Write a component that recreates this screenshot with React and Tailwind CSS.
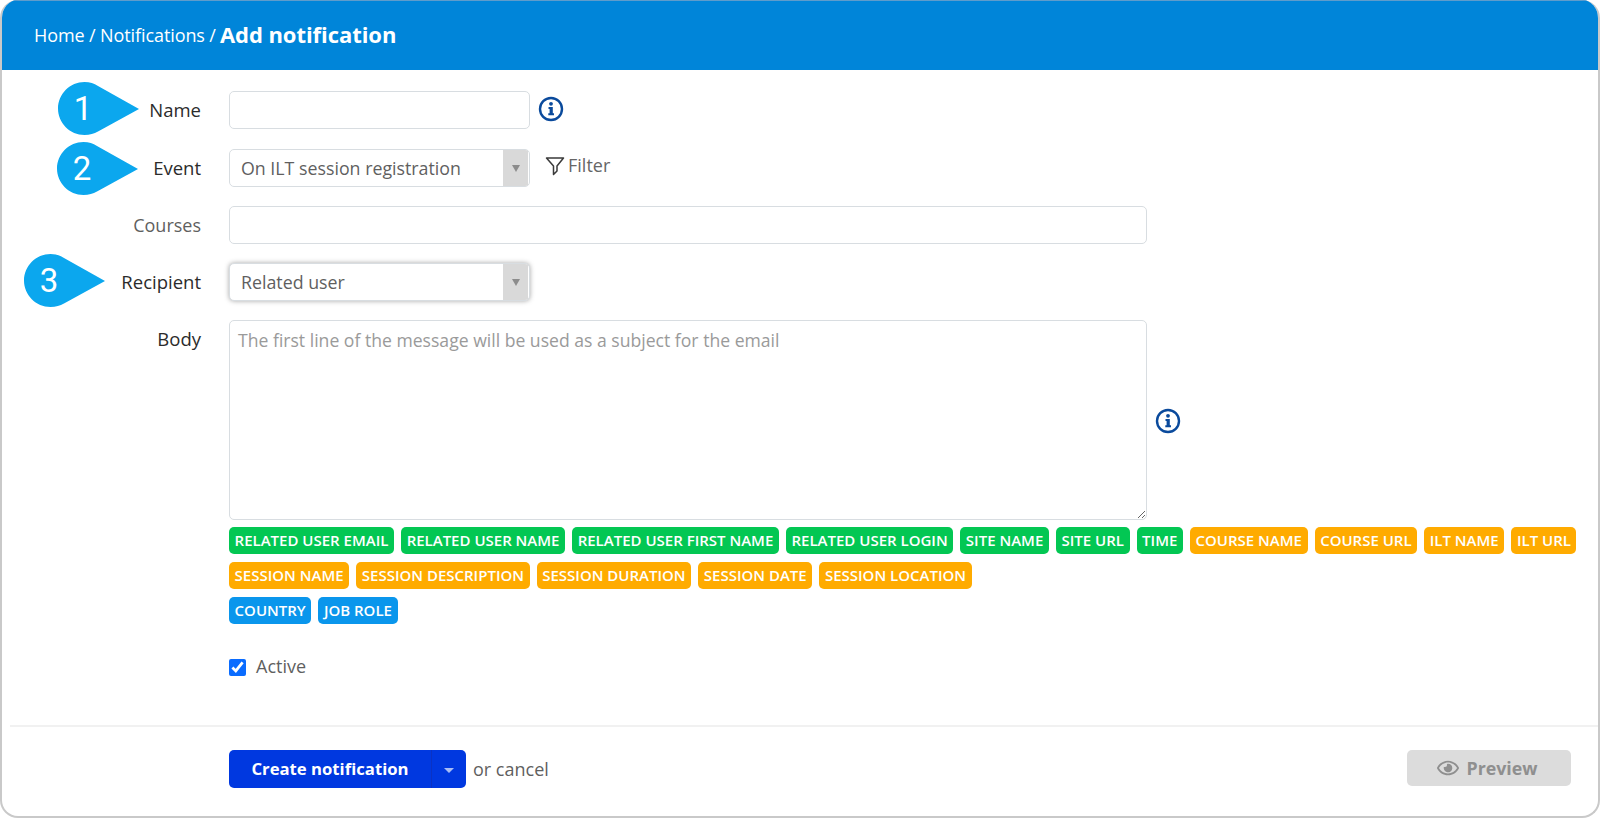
import React from 'react';
import { FaRegEye } from 'react-icons/fa';

const tagRows = [
  [
    ['RELATED USER EMAIL', 'g'], ['RELATED USER NAME', 'g'], ['RELATED USER FIRST NAME', 'g'],
    ['RELATED USER LOGIN', 'g'], ['SITE NAME', 'g'], ['SITE URL', 'g'], ['TIME', 'g'],
    ['COURSE NAME', 'o'], ['COURSE URL', 'o'], ['ILT NAME', 'o'], ['ILT URL', 'o'],
  ],
  [
    ['SESSION NAME', 'o'], ['SESSION DESCRIPTION', 'o'], ['SESSION DURATION', 'o'],
    ['SESSION DATE', 'o'], ['SESSION LOCATION', 'o'],
  ],
  [['COUNTRY', 'b'], ['JOB ROLE', 'b']],
];

const tagColors = { g: 'bg-[#03c753]', o: 'bg-[#ffab00]', b: 'bg-[#0a96ec]' };

function Callout({ n, className }) {
  return (
    <div className={`absolute w-[81px] h-[53px] ${className}`}>
      <svg width="81" height="53" viewBox="0 0 81 53" className="absolute inset-0">
        <path d="M26.500 0C32 0 36 1.500 40 4L81 27L40 49.500C36 51.800 32 53 26.500 53C12 53 0 41 0 26.500C0 12 12 0 26.500 0Z" fill="#0ba7ee" />
      </svg>
      <span className="absolute left-0 top-0 w-[50px] h-[53px] flex items-center justify-center text-white text-[33px] leading-none font-['Roboto',sans-serif] font-normal">
        {n}
      </span>
    </div>
  );
}

function InfoIcon({ className }) {
  return (
    <svg width="26" height="26" viewBox="0 0 26 26" className={className}>
      <circle cx="13" cy="13" r="11" fill="none" stroke="#0a4a9c" strokeWidth="2.400" />
      <circle cx="13" cy="7.800" r="1.900" fill="#0a4a9c" />
      <path d="M10.500 11H14.800V17.300H16V19.200H10.300V17.300H11.600V12.900H10.500Z" fill="#0a4a9c" />
    </svg>
  );
}

function Label({ children, dark, callout, className = '' }) {
  return (
    <div className={`w-[199px] shrink-0 text-right leading-[24px] ${dark ? 'text-[18.500px] text-[#2b2b2b] font-medium' : 'text-[18px] text-[#5f5f5f]'} relative ${className}`}>
      {callout}
      {children}
    </div>
  );
}

function SelectBox({ value, focused }) {
  return (
    <div className={`w-[301px] h-[38px] flex items-stretch rounded-[5px] border border-[#d8dde1] bg-white overflow-hidden ${focused ? 'shadow-[0_0_5px_rgba(0,0,0,0.35)]' : ''}`}>
      <span className="flex-1 pl-[11px] leading-[36px] text-[17.800px] text-[#5f5f5f]">{value}</span>
      <span className="w-[25px] mr-px flex items-center justify-center bg-[#d9d9d9]">
        <span className="w-0 h-0 border-x-[4px] border-x-transparent border-t-[7px] border-t-[#8c8c8c]" />
      </span>
    </div>
  );
}

export default function App() {
  return (
    <div className="w-[1600px] h-[818px] bg-white overflow-hidden font-['Open_Sans',sans-serif]">
      <div className="h-full flex flex-col rounded-[18px] border-2 border-t-0 border-[#c9c9c9] overflow-hidden">
        <div className="h-[70px] shrink-0 bg-[#0085d9] border-t border-[#5f9ccb] flex items-center pl-[32px] text-white text-[18px] tracking-[-0.1px]">
          <span>Home / Notifications / </span>
          <span className="ml-[4px] mb-[3px] text-[22px] font-bold tracking-[-0.05px]">Add notification</span>
        </div>

        <div className="flex-1 flex flex-col pt-[21px]">
          <div className="flex items-center h-[38px]">
            <Label dark callout={<Callout n="1" className="left-[56px] top-[-16px]" />}>Name</Label>
            <input className="ml-[28px] w-[301px] h-[38px] rounded-[5px] border border-[#d8dde1] bg-white" />
            <InfoIcon className="ml-[8px] mb-[2px]" />
          </div>

          <div className="flex items-center h-[38px] mt-[20px]">
            <Label dark callout={<Callout n="2" className="left-[55px] top-[-14px]" />}>Event</Label>
            <div className="ml-[28px]"><SelectBox value="On ILT session registration" /></div>
            <svg width="20" height="20" viewBox="0 0 20 20" className="ml-[15px] mb-[5px]">
              <path d="M1.500 2H18.500L12 10V15L8.500 18.500V10Z" fill="none" stroke="#3a3a3a" strokeWidth="1.500" strokeLinejoin="round" />
            </svg>
            <span className="ml-[3px] mb-[5px] text-[18px] text-[#666]">Filter</span>
          </div>

          <div className="flex items-center h-[38px] mt-[19px]">
            <Label>Courses</Label>
            <input className="ml-[28px] w-[918px] h-[38px] rounded-[5px] border border-[#d8dde1] bg-white" />
          </div>

          <div className="flex items-center h-[38px] mt-[19px]">
            <Label dark callout={<Callout n="3" className="left-[22px] top-[-16px]" />}>Recipient</Label>
            <div className="ml-[28px]"><SelectBox value="Related user" focused /></div>
          </div>

          <div className="flex mt-[19px]">
            <Label dark className="pt-[7px]">Body</Label>
            <textarea
              className="ml-[28px] w-[918px] h-[200px] rounded-[5px] border border-[#d8dde1] bg-white px-[8px] py-[6px] text-[17.600px] text-[#5f5f5f] placeholder:text-[#9a9a9a] outline-none"
              placeholder="The first line of the message will be used as a subject for the email"
            />
            <InfoIcon className="ml-[8px] mt-[88px]" />
          </div>

          <div className="ml-[227px] mt-[7px] flex flex-col gap-[8px]">
            {tagRows.map((row, i) => (
              <div key={i} className="flex gap-[7px]">
                {row.map(([text, color]) => (
                  <span key={text} className={`h-[27px] px-[5.600px] rounded-[5px] text-white text-[15px] font-semibold leading-[27px] whitespace-nowrap ${tagColors[color]}`}>
                    {text}
                  </span>
                ))}
              </div>
            ))}
          </div>

          <label className="ml-[227px] mt-[34px] flex items-center h-[18px] text-[18px] text-[#5f5f5f]">
            <input type="checkbox" defaultChecked className="w-[17px] h-[17px] accent-[#0a6cff]" />
            <span className="ml-[10px] mb-[2px]">Active</span>
          </label>

          <div className="mt-[49px] ml-[8px] border-t-2 border-[#f1f1f1]" />

          <div className="flex items-start mt-[23px] pl-[227px] pr-[27px]">
            <div className="w-[237px] h-[38px] flex rounded-[5px] bg-[#0038e0] text-white text-[16.700px] font-bold">
              <span className="w-[202px] text-center leading-[38px]">Create notification</span>
              <span className="flex-1 flex items-center justify-center border-l border-[#0a32c4]">
                <span className="w-0 h-0 mt-[2px] border-x-[5px] border-x-transparent border-t-[5px] border-t-[#a9bdf5]" />
              </span>
            </div>
            <span className="ml-[7px] leading-[38px] text-[18px] text-[#5f5f5f]">or cancel</span>
            <div className="ml-auto w-[164px] h-[36px] pr-[3px] flex items-center justify-center gap-[7px] rounded-[5px] bg-[#dcdcdc] text-[#8f8f8f] text-[17.800px] font-bold">
              <FaRegEye size={22} />
              <span>Preview</span>
            </div>
          </div>
        </div>
      </div>
    </div>
  );
}
